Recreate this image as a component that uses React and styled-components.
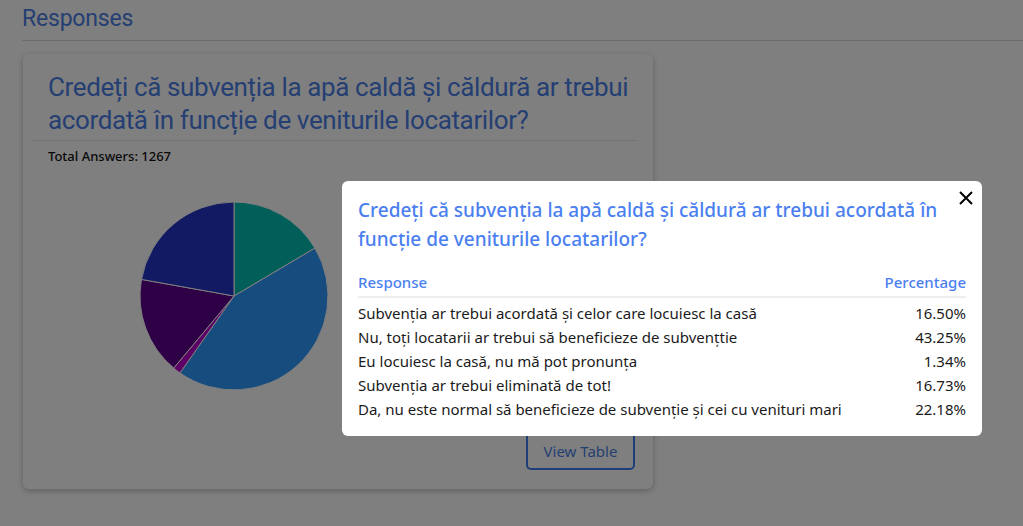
import React from 'react';
import styled, { createGlobalStyle } from 'styled-components';

const GlobalStyle = createGlobalStyle`
  html, body {
    margin: 0;
    background: #ffffff;
    font-family: "Noto Sans", "Open Sans", sans-serif;
    color: #212529;
  }
  * { box-sizing: border-box; }
`;

const Page = styled.div`
  padding: 4px 0 0 22px;
  height: 526px;
  overflow: hidden;
`;

const PageTitle = styled.h2`
  margin: 0;
  padding-bottom: 6px;
  border-bottom: 1px solid #d8d8d8;
  font-family: Roboto, "Liberation Sans", sans-serif;
  font-weight: 400;
  font-size: 23px;
  line-height: 30px;
  letter-spacing: -0.2px;
  color: #4a7fe6;
`;

const Card = styled.div`
  margin: 13px 0 0 1px;
  width: 630px;
  height: 435px;
  padding: 17px 16px 0 9px;
  border-radius: 6px;
  background: #fff;
  box-shadow: 0 2px 6px rgba(0, 0, 0, 0.25);
  display: flex;
  flex-direction: column;
`;

const CardTitle = styled.h3`
  margin: 0;
  padding: 0 0 3px 16px;
  border-bottom: 1px solid #e2e2e2;
  font-family: Roboto, "Liberation Sans", sans-serif;
  font-weight: 400;
  font-size: 26px;
  line-height: 33px;
  letter-spacing: -0.38px;
  color: #4a7fe6;
`;

const Total = styled.div`
  padding: 6px 0 0 16px;
  font-family: "Noto Sans", sans-serif;
  font-weight: 500;
  font-size: 13px;
  line-height: 18px;
  color: #111;
`;

const ChartRow = styled.div`
  display: flex;
  padding: 35px 0 0 106px;
`;

const Footer = styled.div`
  margin-top: auto;
  display: flex;
  justify-content: flex-end;
  padding: 0 2px 19px 0;
`;

const OutlineButton = styled.button`
  width: 109px;
  height: 38px;
  border: 2px solid #3a7df0;
  border-radius: 5px;
  background: transparent;
  color: #4a7fe6;
  font-family: "Noto Sans", sans-serif;
  font-size: 15px;
`;

const Overlay = styled.div`
  position: fixed;
  inset: 0;
  background: rgba(0, 0, 0, 0.5);
`;

const Modal = styled.div`
  position: absolute;
  left: 342px;
  top: 181px;
  width: 640px;
  padding: 15px 16px 15px 16px;
  background: #fff;
  border-radius: 6px;
`;

const CloseButton = styled.button`
  position: absolute;
  top: 8px;
  right: 8px;
  width: 16px;
  height: 20px;
  padding: 0;
  border: 0;
  background: transparent;
  cursor: pointer;
`;

const ModalTitle = styled.h4`
  margin: 0 24px 0 0;
  font-weight: 500;
  font-size: 19px;
  line-height: 29px;
  color: #4b7ff0;
`;

const Table = styled.table`
  width: 100%;
  margin-top: 16px;
  border-collapse: collapse;
  font-size: 15px;
`;

const Th = styled.th`
  padding: 0 0 2px;
  text-align: ${({ right }) => (right ? 'right' : 'left')};
  font-weight: 500;
  color: #4b7ff0;
  border-bottom: 2px solid #eeeeee;
  line-height: 24px;
`;

const Td = styled.td`
  padding: 0;
  line-height: 24px;
  text-align: ${({ right }) => (right ? 'right' : 'left')};
  color: #1b1b1b;

  tr:first-child > & {
    padding-top: 3px;
  }
`;

const question = 'Credeți că subvenția la apă caldă și căldură ar trebui acordată în funcție de veniturile locatarilor?';

const answers = [
  { label: 'Subvenția ar trebui acordată și celor care locuiesc la casă', pct: 16.5, color: '#02bcb0' },
  { label: 'Nu, toți locatarii ar trebui să beneficieze de subvențtie', pct: 43.25, color: '#2e98fe' },
  { label: 'Eu locuiesc la casă, nu mă pot pronunța', pct: 1.34, color: '#b800cc' },
  { label: 'Subvenția ar trebui eliminată de tot!', pct: 16.73, color: '#5c008c' },
  { label: 'Da, nu este normal să beneficieze de subvenție și cei cu venituri mari', pct: 22.18, color: '#2434c6' },
];

const Pie = ({ data, r = 94 }) => {
  let angle = 0;
  const c = r + 2;
  const pt = (a) => [c + r * Math.sin(a), c - r * Math.cos(a)];
  return (
    <svg width={c * 2} height={c * 2}>
      {data.map((d) => {
        const start = angle;
        angle += (d.pct / 100) * Math.PI * 2;
        const [x1, y1] = pt(start);
        const [x2, y2] = pt(angle);
        const large = angle - start > Math.PI ? 1 : 0;
        return (
          <path
            key={d.label}
            d={`M${c},${c} L${x1},${y1} A${r},${r} 0 ${large} 1 ${x2},${y2} Z`}
            fill={d.color}
            stroke="#fff"
            strokeWidth="1"
          />
        );
      })}
    </svg>
  );
};

export default function App() {
  return (
    <>
      <GlobalStyle />
      <Page>
        <PageTitle>Responses</PageTitle>
        <Card>
          <CardTitle>{question}</CardTitle>
          <Total>Total Answers: 1267</Total>
          <ChartRow>
            <Pie data={answers} />
          </ChartRow>
          <Footer>
            <OutlineButton>View Table</OutlineButton>
          </Footer>
        </Card>
      </Page>
      <Overlay>
        <Modal>
          <CloseButton aria-label="Close">
            <svg width="14" height="14" viewBox="0 0 14 14">
              <path d="M1 1 L13 13 M13 1 L1 13" stroke="#000" strokeWidth="2" />
            </svg>
          </CloseButton>
          <ModalTitle>{question}</ModalTitle>
          <Table>
            <thead>
              <tr>
                <Th>Response</Th>
                <Th right>Percentage</Th>
              </tr>
            </thead>
            <tbody>
              {answers.map((a) => (
                <tr key={a.label}>
                  <Td>{a.label}</Td>
                  <Td right>{a.pct.toFixed(2)}%</Td>
                </tr>
              ))}
            </tbody>
          </Table>
        </Modal>
      </Overlay>
    </>
  );
}
